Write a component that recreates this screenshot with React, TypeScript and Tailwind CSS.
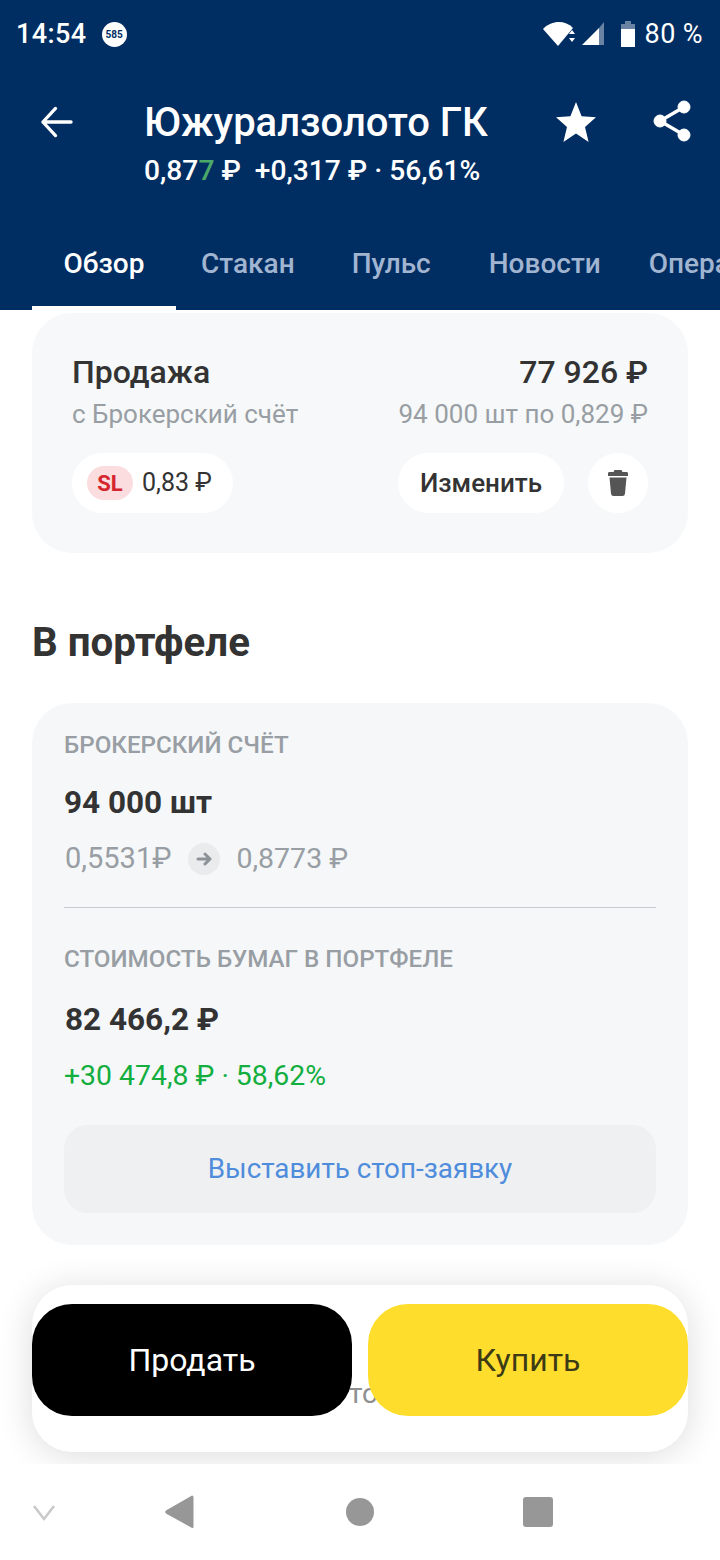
import React from "react";

function Ruble() {
  return <span>₽</span>;
}

export default function App() {
  return (
    <div className="relative flex h-[1560px] w-[720px] flex-col overflow-hidden bg-white font-['Roboto',sans-serif] text-[#333333]">
      <header className="flex h-[310px] shrink-0 flex-col bg-[#002d62] text-white">
        <div className="flex h-[68px] shrink-0 items-center justify-between pl-[17px] pr-[17px]">
          <div className="flex items-center gap-[15px]">
            <span className="-ml-[1px] text-[27px] font-medium leading-none tracking-[0.4px]">14:54</span>
            <span className="flex h-[25px] w-[25px] items-center justify-center rounded-full bg-white text-[10px] font-bold text-[#002d62]">585</span>
          </div>
          <div className="flex items-center">
            <svg width="34" height="26" viewBox="0 0 34 26" className="mr-[5px]">
              <path d="M0 8 C9 -1 22 -1 30 7 L15 25 Z" fill="#fff" />
              <path d="M26 13 l3 -4 l3 4 Z M26 17 h6 l-3 4 Z" fill="#fff" />
            </svg>
            <svg width="24" height="24" viewBox="0 0 24 24" className="mr-[14px]">
              <path d="M0 23 L17 6 V23 Z" fill="#fff" />
              <path d="M17 6 L22 0 V23 H17 Z" fill="#6b83a3" />
            </svg>
            <svg width="16" height="26" viewBox="0 0 16 26" className="mr-[9px]">
              <path d="M5 0 H11 V3 H15 V8 H1 V3 H5 Z" fill="#6b83a3" />
              <rect x="1" y="8" width="14" height="18" fill="#fff" />
            </svg>
            <span className="text-[27px] leading-none tracking-[0.4px]">80 %</span>
          </div>
        </div>
        <div className="flex h-[121px] shrink-0">
          <div className="flex w-[144px] shrink-0 items-start pl-[40px] pt-[38px]">
            <svg width="33" height="32" viewBox="0 0 34 32" fill="none" stroke="#fff" strokeWidth="3.4" strokeLinecap="round" strokeLinejoin="round">
              <path d="M32 16 H3 M16 2 L3 16 L16 30" />
            </svg>
          </div>
          <div className="flex w-[401px] flex-col pt-[30px]">
            <span className="whitespace-nowrap text-[40px] font-medium leading-[50px]">Южуралзолото ГК</span>
            <span className="mt-[1px] whitespace-nowrap text-[28.2px] font-medium leading-[44px]">
              0,87<span className="text-[#4ba96a]">7</span> <Ruble />&nbsp; +0,317 <Ruble /> · 56,61%
            </span>
          </div>
          <div className="flex flex-1 items-start pl-[11px] pt-[34px]">
            <svg width="40" height="40" viewBox="0 0 40 40" fill="#fff">
              <path d="M20 0 L25.6 14.2 L40 15.2 L29 25 L32.6 40 L20 31.6 L7.4 40 L11 25 L0 15.2 L14.4 14.2 Z" />
            </svg>
            <svg width="38" height="42" viewBox="0 0 38 42" className="ml-[57px] -mt-[2px]" fill="#fff" stroke="#fff">
              <circle cx="31" cy="7" r="6" />
              <circle cx="7" cy="21" r="6" />
              <circle cx="31" cy="35" r="6" />
              <path d="M31 7 L7 21 L31 35" fill="none" strokeWidth="3.4" />
            </svg>
          </div>
        </div>
        <nav className="flex min-h-0 flex-1 overflow-hidden whitespace-nowrap text-[28px] font-medium text-[#a1b4d0]">
          <div className="ml-[32px] flex w-[144px] shrink-0 justify-center border-b-[4px] border-white pt-[54px] text-white">Обзор</div>
          <div className="ml-[25px] pt-[54px]">Стакан</div>
          <div className="ml-[57px] pt-[54px]">Пульс</div>
          <div className="ml-[58px] pt-[54px]">Новости</div>
          <div className="ml-[48px] pt-[54px]">Операции</div>
        </nav>
      </header>

      <main className="relative flex min-h-0 flex-1 flex-col px-[32px] pt-[3px]">
        <section className="flex h-[240px] shrink-0 flex-col rounded-[40px] bg-[#f6f8f9] px-[40px] pt-[38px]">
          <div className="flex items-center justify-between text-[32px] font-medium leading-[42px]">
            <span>Продажа</span>
            <span>77 926 <Ruble /></span>
          </div>
          <div className="mt-[1px] flex items-center justify-between text-[26px] leading-[40px] text-[#989ea3]">
            <span>с Брокерский счёт</span>
            <span>94 000 шт по 0,829 <Ruble /></span>
          </div>
          <div className="mt-[19px] flex items-center">
            <div className="flex h-[60px] w-[161px] items-center rounded-full bg-white pl-[15px]">
              <span className="flex h-[34px] w-[46px] items-center justify-center rounded-full bg-[#fbdcdf] text-[22px] font-bold text-[#d5252e]">SL</span>
              <span className="ml-[9px] text-[25px]">0,83 <Ruble /></span>
            </div>
            <button className="ml-auto flex h-[60px] w-[166px] items-center justify-center rounded-full bg-white text-[26px] font-medium">Изменить</button>
            <button className="ml-[24px] flex h-[60px] w-[60px] items-center justify-center rounded-full bg-white">
              <svg width="20" height="26" viewBox="0 0 20 26" fill="#555">
                <path d="M6.5 0 H13.5 L14.5 2 H19 Q20 2 20 3.5 V6 H0 V3.5 Q0 2 1 2 H5.5 Z" />
                <path d="M1.5 7.5 H18.5 L17 23.5 Q16.8 26 14.5 26 H5.5 Q3.2 26 3 23.5 Z" />
              </svg>
            </button>
          </div>
        </section>

        <h2 className="mt-[65px] text-[40.3px] font-bold leading-[50px]">В портфеле</h2>

        <section className="mt-[35px] flex h-[542px] shrink-0 flex-col rounded-[40px] bg-[#f5f7f9] px-[32px] pt-[27px]">
          <div className="text-[24.2px] font-medium leading-[30px] text-[#989ea3]">БРОКЕРСКИЙ СЧЁТ</div>
          <div className="mt-[25px] text-[31.5px] font-bold leading-[36px]">94 000 шт</div>
          <div className="mt-[20px] flex h-[36px] items-center text-[29px] text-[#989ea3]">
            <span className="ml-[1px]">0,5531<Ruble /></span>
            <span className="ml-[17px] flex h-[32px] w-[32px] items-center justify-center rounded-full bg-[#eaebed]">
              <svg width="16" height="14" viewBox="0 0 16 14" fill="none" stroke="#8c9298" strokeWidth="3" strokeLinecap="round" strokeLinejoin="round">
                <path d="M2 7 H14 M9 2 L14 7 L9 12" />
              </svg>
            </span>
            <span className="ml-[16px] text-[28.5px]">0,8773 <Ruble /></span>
          </div>
          <div className="mt-[30px] h-px bg-[#c9cbce]" />
          <div className="mt-[36px] text-[24.2px] font-medium leading-[30px] text-[#989ea3]">СТОИМОСТЬ БУМАГ В ПОРТФЕЛЕ</div>
          <div className="ml-[1px] mt-[26px] text-[31.5px] font-bold leading-[40px]">82 466,2 <Ruble /></div>
          <div className="mt-[16px] text-[28.4px] leading-[40px] text-[#12ae3e]">+30 474,8 <Ruble /> · 58,62%</div>
          <button className="mt-[29px] flex h-[88px] items-center justify-center rounded-[24px] bg-[#eef0f2] text-[27.8px] text-[#4f8cdc]">Выставить стоп-заявку</button>
        </section>

        <div className="absolute inset-x-[32px] top-[975px] h-[167px] rounded-[40px] bg-white pt-[19px] shadow-[0_4px_36px_rgba(0,0,0,0.14)]">
          <div className="relative flex gap-[16px]">
            <span className="absolute left-[317px] top-[72px] text-[28px] leading-[36px] text-[#8f8f8f]">то</span>
            <button className="relative flex h-[112px] flex-1 items-center justify-center rounded-[40px] bg-black text-[32px] text-white">Продать</button>
            <button className="relative flex h-[112px] flex-1 items-center justify-center rounded-[40px] bg-[#ffdd2d] text-[32px] text-[#3d3a16]">Купить</button>
          </div>
        </div>
      </main>

      <footer className="relative flex h-[96px] shrink-0 items-center bg-white">
        <svg width="24" height="20" viewBox="0 0 24 20" fill="none" stroke="#c9c9c9" strokeWidth="2.5" className="ml-[32px]">
          <path d="M2 4 L12 17 L22 4" />
        </svg>
        <svg width="29" height="34" viewBox="0 0 30 34" fill="#979797" className="ml-[109px]">
          <path d="M28 0 Q29.5 0 29.5 2 V32 Q29.5 34 28 33.5 L1 18.5 Q-0.5 17 1 15.5 Z" />
        </svg>
        <div className="ml-[152px] h-[28px] w-[28px] rounded-full bg-[#979797]" />
        <div className="ml-[149px] h-[30px] w-[30px] rounded-[3px] bg-[#979797]" />
      </footer>
    </div>
  );
}
